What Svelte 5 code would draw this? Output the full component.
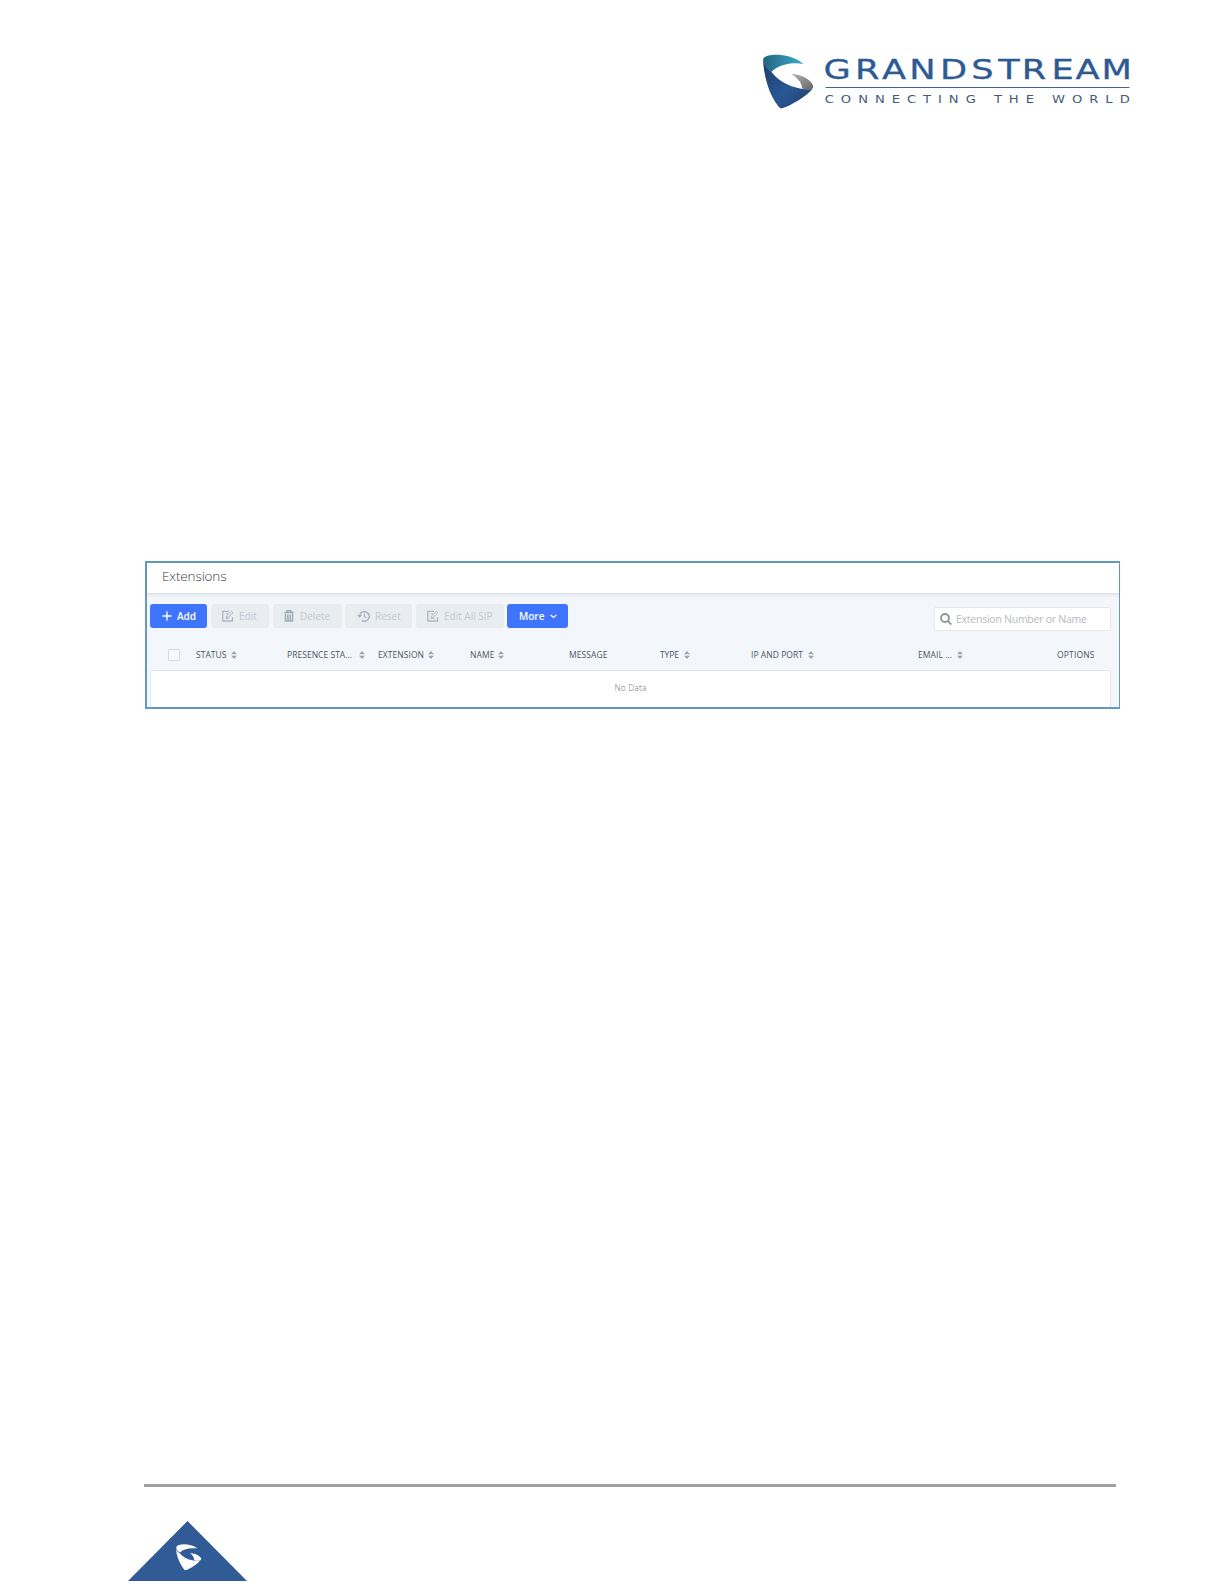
<script lang="ts">
  type Column = { label: string; width: number; sortable?: boolean; text: number; gap?: number };

  // text is the label's width, gap the room before the sort arrows
  const columns: Column[] = [
    { label: "STATUS", width: 91, sortable: true, text: 30.5 },
    { label: "PRESENCE STA...", width: 91, sortable: true, text: 65, gap: 7 },
    { label: "EXTENSION", width: 91.5, sortable: true, text: 46 },
    { label: "NAME", width: 99.5, sortable: true, text: 24.5 },
    { label: "MESSAGE", width: 91, text: 38.5 },
    { label: "TYPE", width: 91, sortable: true, text: 19, gap: 5 },
    { label: "IP AND PORT", width: 166.5, sortable: true, text: 52, gap: 5 },
    { label: "EMAIL ...", width: 139, sortable: true, text: 34, gap: 5 },
    { label: "OPTIONS", width: 54, text: 37.5 },
  ];

  const template = columns.map((c) => `${c.width}px`).join(" ");

  let search = $state("");
  let allChecked = $state(false);
</script>

{#snippet editIcon()}
  <svg width="12" height="12" viewBox="0 0 12 12" fill="none" stroke="currentColor" stroke-width="1.3">
    <path d="M7 1.300H.8v9.700h9.700V7.200"></path>
    <path d="M3.500 3.500h2.500M3.500 8.500h4" stroke-width=".8"></path>
    <path d="M4.300 7.600l.5-1.900 4.600-4.500 1.600 1.500-4.700 4.500z" stroke-width="1"></path>
  </svg>
{/snippet}

{#snippet sortIcon()}
  <svg class="sort" width="6" height="8" viewBox="0 0 6 8">
    <path d="M3 0l2.900 3.200H.1z"></path>
    <path d="M3 8L.1 4.800h5.800z"></path>
  </svg>
{/snippet}

<div class="page">
  <header class="brand">
    <svg width="370" height="56" viewBox="0 0 370 56">
      <defs>
        <linearGradient id="teal" x1="0" y1="0" x2="1" y2="0">
          <stop offset="0" stop-color="#22647f"></stop>
          <stop offset=".5" stop-color="#3189a8"></stop>
          <stop offset="1" stop-color="#39aacb"></stop>
        </linearGradient>
        <linearGradient id="navy" x1="0" y1="0" x2="1" y2="1">
          <stop offset="0" stop-color="#1c3c68"></stop>
          <stop offset=".55" stop-color="#2a5795"></stop>
          <stop offset="1" stop-color="#1f3f6d"></stop>
        </linearGradient>
        <linearGradient id="grey" x1="0" y1="0" x2="1" y2="1">
          <stop offset="0" stop-color="#b5b5b5"></stop>
          <stop offset="1" stop-color="#666"></stop>
        </linearGradient>
      </defs>
      <path d="M1.200 5C3 1 11 .5 19 1c9 .8 17 4 22.500 9C31 8 17 10 9.500 18 5 15 1 10 1.200 5z" fill="url(#teal)"></path>
      <path d="M1 5c1 6 4.500 10 8.500 13 7 10 25 19 41 17-7 8-21 16-29.500 19-2 .7-3.500 0-4.500-1.500C7 41 1.500 21 1 5z" fill="url(#navy)"></path>
      <path d="M29 20c10 0 19 5 21.800 11 .8 2 .3 3.500-1.300 4-3.500.4-7 .2-9.500-.5C40 29 36 24 29 20z" fill="url(#grey)"></path>
      <text
        class="name"
        transform="scale(1.33 1)"
        x="46.300 69.900 90.200 110.800 133.800 157.400 177.600 195.300 217.700 235.700 255.300"
        y="25.500">GRANDSTREAM</text
      >
      <path d="M63.500 33.500h304" stroke="#3c6699" stroke-width="1.200"></path>
      <text class="tagline" transform="scale(1.250 1)" x="50.200" y="49" textLength="244">CONNECTING THE WORLD</text>
    </svg>
  </header>

  <section class="panel">
    <h1><svg width="66" height="20"><text x="0" y="13.500" textLength="64.500">Extensions</text></svg></h1>

    <div class="toolbar">
      <button class="btn primary add">
        <svg width="10" height="10" viewBox="0 0 10 10" stroke="currentColor" stroke-width="1.400"><path d="M5 .5v9M.5 5h9"></path></svg>
        <span>Add</span>
      </button>
      <button class="btn edit" disabled>
        {@render editIcon()}
        <span>Edit</span>
      </button>
      <button class="btn delete" disabled>
        <svg width="10" height="12" viewBox="0 0 10 12" fill="none" stroke="currentColor">
          <path d="M.3 2.500h9.400M3 2V.8h4V2" stroke-width="1.500"></path>
          <path d="M1.500 3.500v7.600h7V3.500M3.900 4.500v6M6.200 4.500v6" stroke-width="1.500"></path>
        </svg>
        <span>Delete</span>
      </button>
      <button class="btn reset" disabled>
        <svg width="13" height="12" viewBox="0 0 13 12" fill="none" stroke="currentColor" stroke-width="1.600">
          <path d="M2.600 6a4.800 4.800 0 1 1 2.200 4.400"></path>
          <path d="M7.300 3.200v3.200l2.200 1.300" stroke-width="1.200"></path>
          <path d="M0 5h5.200L2.600 8z" fill="currentColor" stroke="none"></path>
        </svg>
        <span>Reset</span>
      </button>
      <button class="btn edit-sip" disabled>
        {@render editIcon()}
        <span>Edit All SIP</span>
      </button>
      <button class="btn primary more">
        <span>More</span>
        <svg width="7" height="5" viewBox="0 0 7 5" fill="none" stroke="currentColor" stroke-width="1.200"><path d="M.6 1l2.900 2.500L6.400 1"></path></svg>
      </button>

      <label class="search">
        <svg width="12" height="12" viewBox="0 0 12 12" fill="none" stroke="currentColor" stroke-width="1.800">
          <circle cx="5" cy="5" r="4"></circle>
          <path d="M7.800 7.800l3.500 3.700"></path>
        </svg>
        <input type="text" placeholder="Extension Number or Name" bind:value={search} />
      </label>
    </div>

    <div class="table">
      <div class="thead">
        <input type="checkbox" bind:checked={allChecked} aria-label="Select all" />
        <div class="columns" style:grid-template-columns={template}>
          {#each columns as column}
            <div class="th" style:gap="{column.gap ?? 4}px">
              <svg width={column.text} height="12">
                <text x="0" y="9" textLength={column.text}>{column.label}</text>
              </svg>
              {#if column.sortable}
                {@render sortIcon()}
              {/if}
            </div>
          {/each}
        </div>
      </div>
      <div class="empty">No Data</div>
    </div>
  </section>

  <footer>
    <div class="rule"></div>
    <svg class="corner" width="120" height="60" viewBox="0 0 120 60">
      <path d="M59.500 0l59.500 60H0z" fill="#315b97"></path>
      <path d="M48.300 26c1.500-3.500 14-4 21.200 1.500-7-.8-13.500 0-17.500 4-2-1-4-3-3.700-5.500z" fill="#fff"></path>
      <path d="M48 27.800c.8 2.200 2 3.700 4 4.600 4 4.500 10 8 20 7-3 4-9 7.500-13.500 9.700-1 .4-2 0-2.500-.8-4.500-6-7.500-13-8-20.500z" fill="#fff"></path>
      <path d="M62 32.300c5 0 9.500 2.200 11 5 .5 1.200 0 2-1.500 2.200-2 .2-3.500 0-5.300-.6-.2-2.700-1.700-4.900-4.200-6.600z" fill="#fff"></path>
    </svg>
  </footer>
</div>

<style>
  :global(body) {
    background: #fff;
  }

  .page {
    display: flex;
    flex-direction: column;
    box-sizing: border-box;
    width: 1224px;
    height: 1584px;
    padding: 54px 0 3px;
    font-family: "Open Sans", "Noto Sans", sans-serif;
  }

  svg {
    display: block;
    flex-shrink: 0;
  }

  .brand {
    padding-left: 762px;
  }

  .name {
    font: 26.5px "DejaVu Sans", sans-serif;
    fill: #2d5a93;
    stroke: #2d5a93;
    stroke-width: 0.3;
  }

  .tagline {
    font: 10.5px "DejaVu Sans", sans-serif;
    fill: #45597a;
  }

  .panel {
    display: flex;
    flex-direction: column;
    box-sizing: border-box;
    width: 975px;
    height: 148px;
    margin: 451px 0 0 145px;
    border: 2px solid #6698bf;
    border-right-width: 1px;
    background: #f3f7fb;
  }

  h1 {
    box-sizing: border-box;
    height: 31px;
    margin: 0;
    padding: 4px 0 0 15px;
    border-bottom: 1px solid #dde2e6;
    background: #fff;
    box-shadow: 0 1px 4px rgba(0, 0, 0, 0.09);
    font-size: 13.5px;
    font-weight: 300;
    fill: #343c46;
  }

  .toolbar {
    display: flex;
    align-items: flex-start;
    padding: 10px 8px 0 3px;
  }

  .btn {
    display: flex;
    align-items: center;
    box-sizing: border-box;
    height: 24px;
    margin: 0 4px 0 0;
    padding: 0 0 0 11px;
    border: 0;
    border-radius: 3px;
    background: #e9edf0;
    color: #c3c9d0;
    font-family: inherit;
    font-size: 10px;
    line-height: 24px;
    white-space: nowrap;
  }

  .btn svg {
    color: #afb6be;
  }

  .btn.primary {
    background: #3f74ff;
    color: #fff;
    font-weight: 600;
  }

  .btn.primary svg {
    color: #fff;
  }

  .add {
    width: 57px;
    padding-left: 12px;
    gap: 5px;
  }

  .edit {
    width: 58px;
    gap: 5px;
  }

  .delete {
    width: 69px;
    gap: 6px;
    margin-right: 3px;
  }

  .delete svg {
    color: #a3abb3;
  }

  .reset {
    width: 67px;
    padding-left: 12px;
    gap: 5px;
  }

  .edit-sip {
    width: 88px;
    gap: 5px;
    margin-right: 3px;
  }

  .more {
    width: 61px;
    padding-left: 12px;
    gap: 6px;
  }

  .search {
    display: flex;
    align-items: center;
    box-sizing: border-box;
    width: 177px;
    height: 24px;
    margin: 3px 0 0 auto;
    padding-left: 5px;
    gap: 4px;
    border: 1px solid #e4e8ec;
    border-radius: 2px;
    background: #fff;
    color: #8c939b;
  }

  .search input {
    width: 150px;
    padding: 0;
    border: 0;
    outline: 0;
    background: none;
    font: 10.5px "Open Sans", sans-serif;
    letter-spacing: -0.25px;
  }

  .search input::placeholder {
    color: #b7bbc0;
    opacity: 1;
  }

  .table {
    display: flex;
    flex-direction: column;
    flex: 1;
    margin: 9px 8px 0 3px;
  }

  .thead {
    display: flex;
    align-items: center;
    height: 30px;
    padding: 0 0 0 18px;
  }

  .thead input {
    appearance: none;
    box-sizing: border-box;
    width: 12px;
    height: 12px;
    margin: 0 16px 0 0;
    border: 1px solid #d5d9dd;
    border-radius: 1px;
    background: #f8fafb;
  }

  .columns {
    display: grid;
    align-items: center;
  }

  .th {
    display: flex;
    align-items: center;
    font-size: 8.5px;
    fill: #4b5563;
  }

  .th .sort {
    fill: #9da3ab;
  }

  .empty {
    flex: 1;
    box-sizing: border-box;
    padding-top: 10px;
    border: 1px solid #e3e7eb;
    border-bottom: 0;
    border-radius: 2px 2px 0 0;
    background: #fff;
    color: #6f757c;
    font-size: 8.5px;
    font-weight: 300;
    line-height: 13px;
    letter-spacing: 0.15px;
    text-align: center;
  }

  footer {
    margin-top: auto;
  }

  .rule {
    width: 972px;
    height: 3px;
    margin-left: 144px;
    background: #a0a0a0;
  }

  .corner {
    margin: 34px 0 0 128px;
  }
</style>
